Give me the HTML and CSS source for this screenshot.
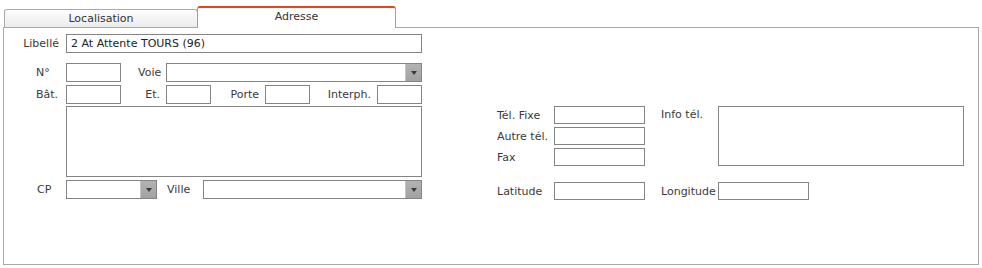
FILE: index.html
```html
<!DOCTYPE html>
<html lang="fr">
<head>
<meta charset="utf-8">
<title>Adresse</title>
<link rel="stylesheet" href="styles.css">
</head>
<body>
<div class="tabs">
  <div class="tab">Localisation</div>
  <div class="tab tab-active">Adresse</div>
</div>
<div class="panel">
  <div class="col-left">
    <div class="row row-lib">
      <span class="lbl lbl-first lbl-right">Libellé</span>
      <input class="field w356" type="text" value="2 At Attente TOURS (96)">
    </div>
    <div class="row row-2">
      <span class="lbl lbl-first">N°</span>
      <input class="field w55" type="text">
      <span class="lbl lbl-voie">Voie</span>
      <div class="combo w256"><span class="combo-btn"></span></div>
    </div>
    <div class="row row-3">
      <span class="lbl lbl-first">Bât.</span>
      <input class="field w55" type="text">
      <span class="lbl lbl-right lbl-et">Et.</span>
      <input class="field w45" type="text">
      <span class="lbl lbl-right lbl-porte">Porte</span>
      <input class="field w45" type="text">
      <span class="lbl lbl-right lbl-interph">Interph.</span>
      <input class="field w45" type="text">
    </div>
    <div class="row row-area">
      <textarea class="area area-left"></textarea>
    </div>
    <div class="row row-cp">
      <span class="lbl lbl-first lbl-cp">CP</span>
      <div class="combo w91 h20"><span class="combo-btn"></span></div>
      <span class="lbl lbl-ville">Ville</span>
      <div class="combo w219 h20"><span class="combo-btn"></span></div>
    </div>
  </div>
  <div class="col-right">
    <div class="tel-block">
      <div class="tel-list">
        <div class="rrow"><span class="lbl rlbl">Tél. Fixe</span><input class="field w91 h18" type="text"></div>
        <div class="rrow"><span class="lbl rlbl">Autre tél.</span><input class="field w91 h18" type="text"></div>
        <div class="rrow"><span class="lbl rlbl">Fax</span><input class="field w91 h18" type="text"></div>
      </div>
      <div class="info">
        <span class="lbl rlbl info-lbl">Info tél.</span>
        <textarea class="area area-info"></textarea>
      </div>
    </div>
    <div class="rrow geo">
      <span class="lbl rlbl">Latitude</span><input class="field w91 h18" type="text">
      <span class="lbl rlbl geo-lon">Longitude</span><input class="field w91 h18" type="text">
    </div>
  </div>
</div>
</body>
</html>
```
FILE: styles.css
```css
* { box-sizing: border-box; }
html, body { margin: 0; padding: 0; background: #fff; }
body {
  font-family: "DejaVu Sans", Verdana, sans-serif;
  font-size: 11px;
  color: #3a3a3a;
}

.tabs {
  display: flex;
  align-items: flex-end;
  height: 27px;
  padding-left: 4px;
}
.tab {
  width: 194px;
  height: 18px;
  border: 1px solid #a9a9a9;
  border-bottom: none;
  border-radius: 3px 3px 0 0;
  background: linear-gradient(#fdfdfd, #ececec);
  text-align: center;
  line-height: 18px;
  color: #333;
}
.tab-active {
  position: relative;
  z-index: 1;
  width: 199px;
  height: 22px;
  margin-left: -1px;
  margin-bottom: -1px;
  border-top: 2px solid #e2461e;
  border-left-color: #a0a0a0;
  border-right-color: #a0a0a0;
  background: #fff;
  line-height: 17px;
}

.panel {
  display: flex;
  align-items: flex-start;
  width: 976px;
  height: 238px;
  margin-left: 3px;
  border: 1px solid #a9a9a9;
  padding-top: 6px;
}

.col-left { width: 418px; }
.row { display: flex; align-items: center; }
.row-2 { margin-top: 10px; }
.row-3 { margin-top: 3px; }
.row-area { margin-top: 2px; padding-left: 62px; }
.row-cp { margin-top: 3px; }

.lbl { display: block; flex: none; white-space: nowrap; }
.lbl-right { text-align: right; padding-right: 6px; }
.lbl-first { width: 62px; padding-left: 32px; }
.lbl-first.lbl-right { padding-left: 0; padding-right: 7px; }
.lbl-cp { padding-left: 33px; }
.lbl-voie { width: 45px; padding-left: 17px; }
.lbl-et { width: 45px; }
.lbl-porte { width: 54px; }
.lbl-interph { width: 67px; }
.lbl-ville { width: 46px; padding-left: 10px; }

.field {
  display: block;
  flex: none;
  height: 19px;
  margin: 0;
  border: 1px solid #848484;
  border-radius: 0;
  padding: 0 4px;
  background: #fff;
  font: inherit;
  color: #222;
  outline: none;
}
.w356 { width: 356px; }
.w256 { width: 256px; }
.w219 { width: 219px; }
.w91 { width: 91px; }
.w55 { width: 55px; }
.w45 { width: 45px; }
.h18 { height: 18px; }
.h20 { height: 20px; }

.combo {
  display: flex;
  justify-content: flex-end;
  flex: none;
  height: 19px;
  border: 1px solid #848484;
  background: #fff;
}
.combo-btn {
  display: flex;
  align-items: center;
  justify-content: center;
  width: 16px;
  background: linear-gradient(#b3b3b3, #a2a2a2);
  border-left: 1px solid #c4c4c4;
}
.combo-btn::after {
  content: "";
  display: block;
  border-left: 3.5px solid transparent;
  border-right: 3.5px solid transparent;
  border-top: 4px solid #3a3a3a;
  margin-top: 1px;
}

.area {
  display: block;
  margin: 0;
  padding: 2px 4px;
  border: 1px solid #848484;
  border-radius: 0;
  resize: none;
  background: #fff;
  font: inherit;
  outline: none;
}
.area-left { width: 356px; height: 71px; }
.area-info { width: 246px; height: 60px; }

.col-right {
  margin-left: 75px;
  margin-top: 72px;
}
.tel-block { display: flex; align-items: flex-start; }
.tel-list { display: flex; flex-direction: column; gap: 3px; }
.rrow { display: flex; align-items: center; }
.rlbl { width: 57px; }
.info { display: flex; align-items: flex-start; margin-left: 16px; }
.info-lbl { line-height: 18px; }
.geo { margin-top: 16px; }
.geo-lon { margin-left: 16px; }
```
